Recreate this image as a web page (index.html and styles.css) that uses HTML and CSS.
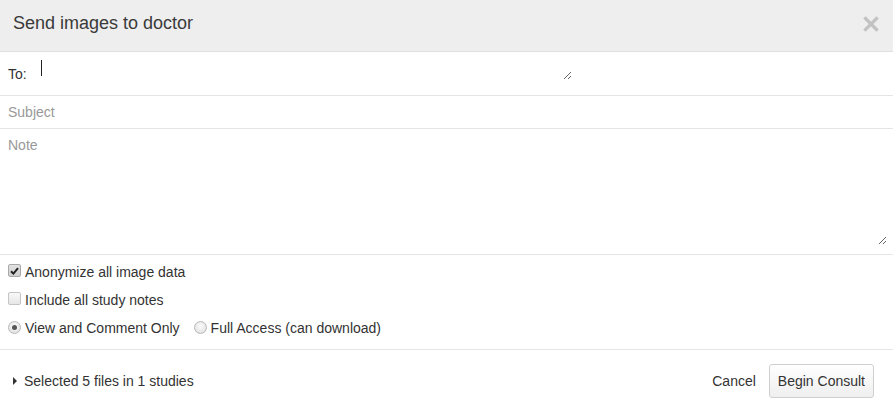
FILE: index.html
```html
<!DOCTYPE html>
<html>
<head>
<meta charset="utf-8">
<link rel="stylesheet" href="styles.css">
</head>
<body>
<div class="modal">
  <div class="modal-header">
    <h4 class="modal-title">Send images to doctor</h4>
    <button class="close" aria-label="Close">
      <svg width="16" height="16" viewBox="0 0 16 16"><path d="M2.5 2.5 L13.5 13.5 M13.5 2.5 L2.5 13.5" stroke="#c2c2c2" stroke-width="3.2" stroke-linecap="square"/></svg>
    </button>
  </div>
  <div class="row row-to">
    <label class="to-label">To:</label>
    <div class="to-field">
      <textarea class="to-input"></textarea>
      <span class="caret"></span>
    </div>
  </div>
  <div class="row row-subject">
    <input class="subject" type="text" placeholder="Subject">
  </div>
  <div class="row row-note">
    <textarea class="note" placeholder="Note"></textarea>
  </div>
  <div class="row options">
    <div class="opt">
      <span class="cb checked"><svg width="9" height="8" viewBox="0 0 9 8"><path d="M1 4.2 L3.4 6.6 L8 1.2" stroke="#222" stroke-width="2" fill="none"/></svg></span>
      <span>Anonymize all image data</span>
    </div>
    <div class="opt">
      <span class="cb"></span>
      <span>Include all study notes</span>
    </div>
    <div class="opt">
      <span class="rb on"></span>
      <span>View and Comment Only</span>
      <span class="rb second"></span>
      <span>Full Access (can download)</span>
    </div>
  </div>
  <div class="footer">
    <div class="selected"><span class="tri"></span>Selected 5 files in 1 studies</div>
    <div class="actions">
      <button class="btn btn-link">Cancel</button>
      <button class="btn btn-default">Begin Consult</button>
    </div>
  </div>
</div>
</body>
</html>
```
FILE: styles.css
```css
* { box-sizing: border-box; }
html, body { margin: 0; padding: 0; background: #fff; }
body {
  font-family: "Liberation Sans", Arial, sans-serif;
  font-size: 14px;
  color: #333;
  width: 893px;
  height: 405px;
  overflow: hidden;
}
.modal { display: flex; flex-direction: column; }
.modal-header {
  height: 52px;
  background: #eeeeee;
  border-bottom: 1px solid #e0e0e0;
  display: flex;
  align-items: flex-start;
  justify-content: space-between;
  padding: 13px 0 0 13px;
}
.modal-title {
  margin: 0;
  font-size: 18px;
  font-weight: normal;
  line-height: 20px;
  color: #3a3a3a;
}
.close {
  border: 0;
  background: none;
  padding: 0;
  margin: 3px 14px 0 0;
  width: 16px;
  height: 16px;
  display: flex;
}
.row { border-bottom: 1px solid #e5e5e5; }
.row-to {
  height: 44px;
  display: flex;
  align-items: flex-start;
  padding-left: 8px;
}
.to-label { margin-top: 12px; line-height: 20px; width: 32px; }
.to-field { position: relative; height: 28px; }
.to-input {
  width: 532px;
  height: 28px;
  border: 0;
  outline: none;
  padding: 0;
  margin: 0;
  display: block;
  font: inherit;
  background: transparent;
}
.caret {
  position: absolute;
  left: 1px;
  top: 8px;
  width: 1px;
  height: 16px;
  background: #222;
}
.row-subject { height: 33px; display: flex; }
.subject {
  border: 0;
  outline: none;
  width: 100%;
  height: 32px;
  padding: 0 8px;
  font: inherit;
  color: #333;
}
.subject::placeholder, .note::placeholder { color: #999; opacity: 1; }
.row-note { height: 126px; padding: 0 6px 0 0; }
.note {
  display: block;
  width: 100%;
  height: 116px;
  border: 0;
  outline: none;
  padding: 6px 8px;
  font: inherit;
  line-height: 20px;
  margin: 0;
}
.options { padding: 3px 0 7px 8px; height: 95px; }
.opt {
  height: 28px;
  display: flex;
  align-items: center;
  gap: 4px;
  line-height: 20px;
}
.cb {
  width: 13px;
  height: 13px;
  border: 1px solid #c4c4c4;
  border-radius: 2px;
  background: linear-gradient(#f8f8f8, #e6e6e6);
  display: inline-flex;
  align-items: center;
  justify-content: center;
  margin-top: -3px;
}
.cb.checked { background: linear-gradient(#e2e2e2, #cfcfcf); border-color: #a8a8a8; }
.rb {
  width: 13px;
  height: 13px;
  border: 1px solid #b8b8b8;
  border-radius: 50%;
  background: radial-gradient(circle at 50% 40%, #fbfbfb, #dcdcdc);
  display: inline-flex;
  align-items: center;
  justify-content: center;
  margin-top: -2px;
}
.rb.on::after {
  content: "";
  width: 5px;
  height: 5px;
  border-radius: 50%;
  background: #555;
}
.rb.second { margin-left: 10px; }
.footer {
  display: flex;
  justify-content: space-between;
  align-items: center;
  padding: 14px 19px 8px 13px;
}
.selected { display: flex; align-items: center; line-height: 20px; }
.tri {
  width: 0; height: 0;
  border-top: 4px solid transparent;
  border-bottom: 4px solid transparent;
  border-left: 4px solid #333;
  margin-right: 7px;
}
.actions { display: flex; }
.btn {
  font: inherit;
  font-size: 14px;
  line-height: 20px;
  padding: 6px 12px;
  border-radius: 3px;
  cursor: pointer;
}
.btn-link { background: none; border: 1px solid transparent; color: #333; }
.btn-default {
  background: linear-gradient(#ffffff, #efefef);
  border: 1px solid #cfcfcf;
  color: #333;
  height: 34px;
  padding: 6px 8px;
}
```
